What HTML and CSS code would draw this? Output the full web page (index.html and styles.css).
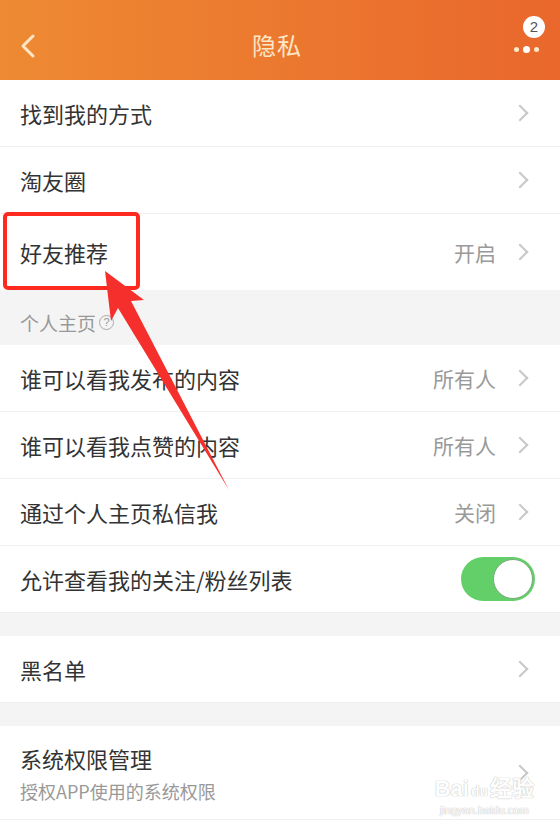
FILE: index.html
```html
<!DOCTYPE html>
<html lang="zh-CN">
<head>
    <meta charset="UTF-8">
    <meta name="viewport" content="width=device-width, initial-scale=1.0">
    <title>隐私</title>
    <link rel="stylesheet" href="styles.css">
</head>
<body>

<div class="page">
    <div class="nav-bar">
        <span class="nav-back">
            <svg width="16" height="26" viewBox="0 0 16 26"><path d="M13 3 L3 13 L13 23" fill="none" stroke="#fbe6c6" stroke-width="3" stroke-linecap="round" stroke-linejoin="round"/></svg>
        </span>
        <span class="nav-title">隐私</span>
        <span class="nav-more">
            <span class="dot"></span><span class="dot big"></span><span class="dot"></span>
            <span class="badge">2</span>
        </span>
    </div>

    <div class="group">
        <div class="row"><span class="label">找到我的方式</span><span class="arrow"></span></div>
        <div class="row"><span class="label">淘友圈</span><span class="arrow"></span></div>
        <div class="row tall"><span class="label">好友推荐</span><span class="value">开启</span><span class="arrow"></span></div>
    </div>

    <div class="section-title">个人主页<span class="help">?</span></div>

    <div class="group">
        <div class="row"><span class="label">谁可以看我发布的内容</span><span class="value">所有人</span><span class="arrow"></span></div>
        <div class="row"><span class="label">谁可以看我点赞的内容</span><span class="value">所有人</span><span class="arrow"></span></div>
        <div class="row"><span class="label">通过个人主页私信我</span><span class="value">关闭</span><span class="arrow"></span></div>
        <div class="row"><span class="label">允许查看我的关注/粉丝列表</span><span class="switch on"><span class="knob"></span></span></div>
    </div>

    <div class="gap"></div>

    <div class="group">
        <div class="row"><span class="label">黑名单</span><span class="arrow"></span></div>
    </div>

    <div class="gap"></div>

    <div class="group">
        <div class="row double">
            <span class="text-block">
                <span class="label">系统权限管理</span>
                <span class="sub">授权APP使用的系统权限</span>
            </span>
            <span class="arrow"></span>
        </div>
        <div class="row"><span class="label">隐私政策</span><span class="arrow"></span></div>
    </div>

    <!-- annotation layer -->
    <div class="mark-box"></div>
    <svg class="mark-arrow" width="560" height="834" viewBox="0 0 560 834">
        <polygon points="105,271 144,300 131,301 229,490 118,308 111,321" fill="#f5302c"/>
    </svg>

    <div class="watermark">
        <span class="wm-logo">Bai<span class="wm-paw">du</span>经验</span>
        <span class="wm-url">jingyan.baidu.com</span>
    </div>
</div>

</body>
</html>
```

FILE: styles.css
```css
body {
    margin: 0;
    padding: 0;
    background: #f4f4f4;
    font-family: "Noto Sans CJK SC", "Noto Sans", sans-serif;
}

.page {
    position: relative;
    width: 560px;
    height: 834px;
    overflow: hidden;
    background: #f4f4f4;
}

.nav-bar {
    height: 80px;
    display: flex;
    align-items: center;
    justify-content: space-between;
    padding: 0 14px 0 20px;
    background: linear-gradient(90deg, #ee8a33, #e9672c);
    color: #fbe6c6;
}

.nav-back {
    width: 28px;
    display: flex;
    align-items: center;
    padding-top: 12px;
}

.nav-title {
    font-size: 24px;
    letter-spacing: 1px;
    padding-top: 8px;
}

.nav-more {
    position: relative;
    width: 40px;
    height: 40px;
    display: flex;
    align-items: flex-end;
    justify-content: center;
    gap: 4px;
    padding-bottom: 6px;
    box-sizing: border-box;
}

.nav-more .dot {
    width: 5px;
    height: 5px;
    border-radius: 50%;
    background: #fde8c8;
    margin-bottom: 2px;
}

.nav-more .dot.big {
    width: 7px;
    height: 7px;
    background: #fff;
    margin-bottom: 1px;
}

.badge {
    position: absolute;
    top: -4px;
    right: 1px;
    width: 22px;
    height: 22px;
    border-radius: 50%;
    background: #fff;
    color: #555;
    font-size: 15px;
    line-height: 22px;
    text-align: center;
    font-family: "Liberation Sans", sans-serif;
}

.group {
    background: #fff;
}

.row {
    height: 66px;
    display: flex;
    align-items: center;
    padding: 0 34px 0 20px;
    border-bottom: 1px solid #efefef;
}

.row.tall {
    height: 76px;
    border-bottom: none;
}

.row.double {
    height: 93px;
}

.label {
    flex: 1;
    font-size: 22px;
    color: #333;
}

.value {
    font-size: 21px;
    color: #999;
    margin-right: 18px;
}

.arrow {
    width: 10px;
    height: 10px;
    border-top: 2px solid #c8c8c8;
    border-right: 2px solid #c8c8c8;
    transform: rotate(45deg);
}

.text-block {
    flex: 1;
    display: flex;
    flex-direction: column;
    gap: 4px;
}

.sub {
    font-size: 18px;
    color: #999;
}

.section-title {
    height: 55px;
    box-sizing: border-box;
    display: flex;
    align-items: center;
    padding: 10px 20px 0;
    font-size: 19px;
    color: #999;
}

.help {
    width: 13px;
    height: 13px;
    margin-left: 3px;
    border: 1.5px solid #aaa;
    border-radius: 50%;
    font-size: 11px;
    line-height: 13px;
    text-align: center;
    color: #999;
    font-family: "Liberation Sans", sans-serif;
}

.gap {
    height: 23px;
}

.switch {
    width: 74px;
    height: 44px;
    border-radius: 22px;
    background: #63cf68;
    position: relative;
    margin-right: -9px;
}

.switch .knob {
    position: absolute;
    top: 2px;
    right: 2px;
    width: 38px;
    height: 38px;
    border-radius: 50%;
    background: #fff;
    border: 1px solid #7aa97c;
}

.mark-box {
    position: absolute;
    left: 3px;
    top: 212px;
    width: 129px;
    height: 70px;
    border: 4px solid #ff2a1f;
    border-radius: 5px;
}

.mark-arrow {
    position: absolute;
    left: 0;
    top: 0;
}

.watermark {
    position: absolute;
    right: 26px;
    top: 770px;
    display: flex;
    flex-direction: column;
    align-items: center;
    color: #fff;
    text-shadow: 0 0 1px #bbb, 0 0 1px #bbb;
    opacity: 0.9;
}

.wm-logo {
    font-family: "Liberation Sans", sans-serif;
    font-size: 22px;
    font-weight: bold;
}

.wm-paw {
    font-size: 14px;
    margin: 0 2px;
}

.wm-url {
    font-family: "Liberation Sans", sans-serif;
    font-size: 11px;
    margin-top: 2px;
}
```
